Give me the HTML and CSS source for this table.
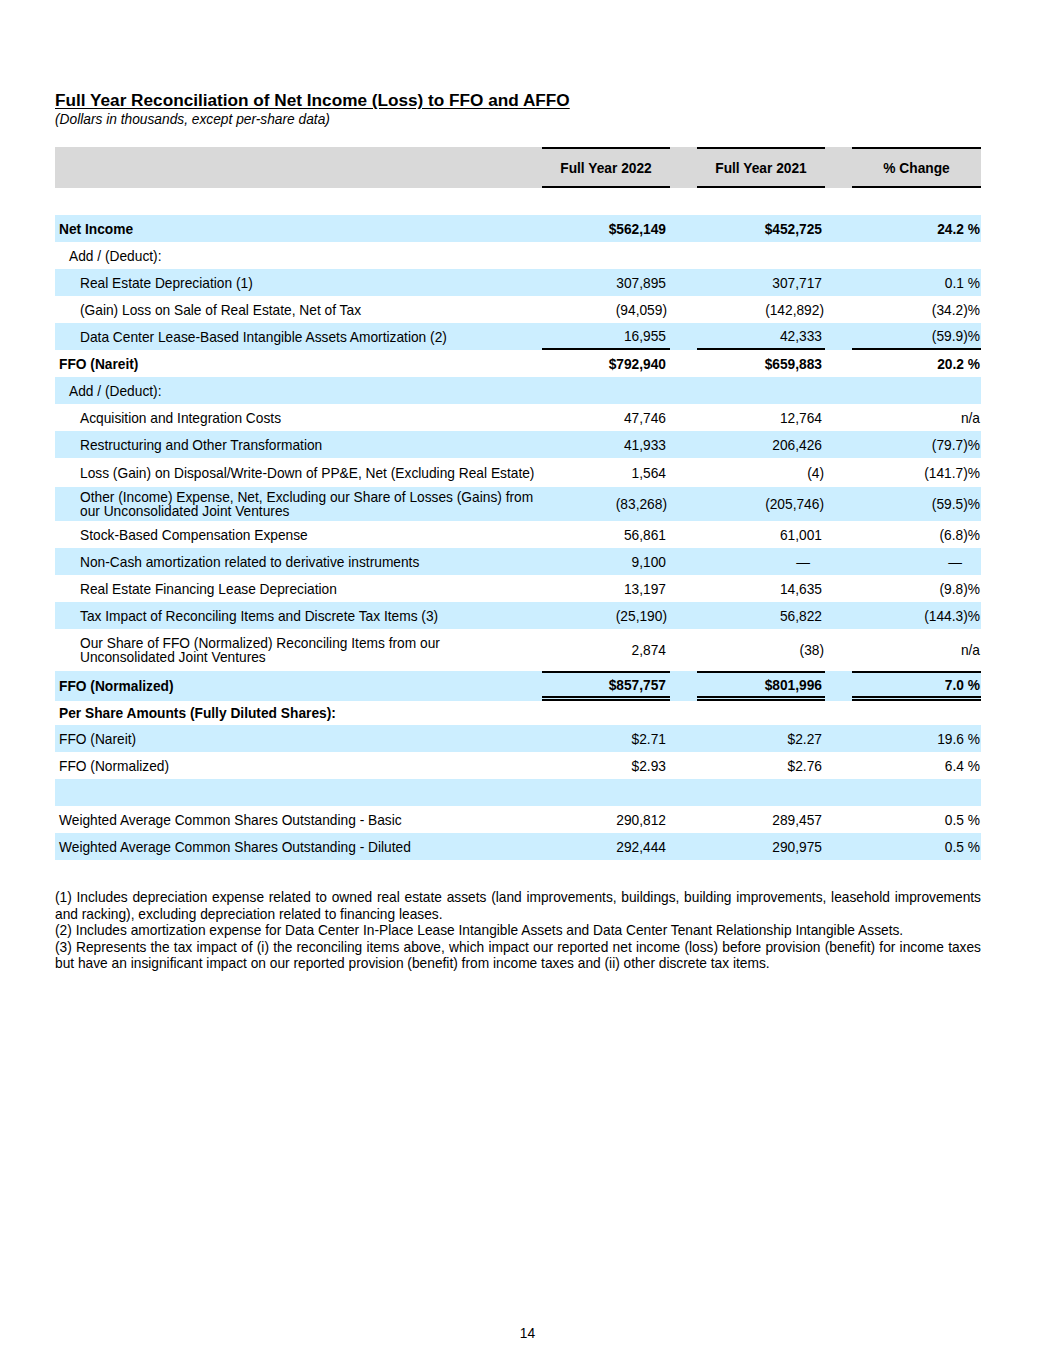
FILE: index.html
```html
<!DOCTYPE html>
<html>
<head>
<meta charset="utf-8">
<link rel="stylesheet" href="styles.css">
</head>
<body>
<div class="page">
  <h1 class="title">Full Year Reconciliation of Net Income (Loss) to FFO and AFFO</h1>
  <p class="subtitle">(Dollars in thousands, except per-share data)</p>

  <table class="recon">
    <colgroup>
      <col class="c-label"><col class="c-num"><col class="c-gap"><col class="c-num"><col class="c-gap"><col class="c-num3">
    </colgroup>
    <thead>
      <tr class="head">
        <th></th><th class="hcol">Full Year 2022</th><th></th><th class="hcol">Full Year 2021</th><th></th><th class="hcol">% Change</th>
      </tr>
    </thead>
    <tbody>
      <tr class="spacer"><td colspan="6"></td></tr>
      <tr class="b bold"><td class="lbl">Net Income</td><td class="n1">$562,149</td><td></td><td class="n2">$452,725</td><td></td><td class="n3">24.2 %</td></tr>
      <tr><td class="lbl i1">Add / (Deduct):</td><td></td><td></td><td></td><td></td><td></td></tr>
      <tr class="b"><td class="lbl i2">Real Estate Depreciation (1)</td><td class="n1">307,895</td><td></td><td class="n2">307,717</td><td></td><td class="n3">0.1 %</td></tr>
      <tr><td class="lbl i2">(Gain) Loss on Sale of Real Estate, Net of Tax</td><td class="n1 p">(94,059)</td><td></td><td class="n2 p">(142,892)</td><td></td><td class="n3">(34.2)%</td></tr>
      <tr class="b under"><td class="lbl i2">Data Center Lease-Based Intangible Assets Amortization (2)</td><td class="n1">16,955</td><td></td><td class="n2">42,333</td><td></td><td class="n3">(59.9)%</td></tr>
      <tr class="bold"><td class="lbl">FFO (Nareit)</td><td class="n1">$792,940</td><td></td><td class="n2">$659,883</td><td></td><td class="n3">20.2 %</td></tr>
      <tr class="b"><td class="lbl i1">Add / (Deduct):</td><td></td><td></td><td></td><td></td><td></td></tr>
      <tr><td class="lbl i2">Acquisition and Integration Costs</td><td class="n1">47,746</td><td></td><td class="n2">12,764</td><td></td><td class="n3">n/a</td></tr>
      <tr class="b"><td class="lbl i2">Restructuring and Other Transformation</td><td class="n1">41,933</td><td></td><td class="n2">206,426</td><td></td><td class="n3">(79.7)%</td></tr>
      <tr class="r29"><td class="lbl i2">Loss (Gain) on Disposal/Write-Down of PP&amp;E, Net (Excluding Real Estate)</td><td class="n1">1,564</td><td></td><td class="n2 p">(4)</td><td></td><td class="n3">(141.7)%</td></tr>
      <tr class="b two"><td class="lbl i2">Other (Income) Expense, Net, Excluding our Share of Losses (Gains) from<br>our Unconsolidated Joint Ventures</td><td class="n1 p">(83,268)</td><td></td><td class="n2 p">(205,746)</td><td></td><td class="n3">(59.5)%</td></tr>
      <tr><td class="lbl i2">Stock-Based Compensation Expense</td><td class="n1">56,861</td><td></td><td class="n2">61,001</td><td></td><td class="n3">(6.8)%</td></tr>
      <tr class="b"><td class="lbl i2">Non-Cash amortization related to derivative instruments</td><td class="n1">9,100</td><td></td><td class="n2 dash">&mdash;</td><td></td><td class="n3 dash3">&mdash;</td></tr>
      <tr><td class="lbl i2">Real Estate Financing Lease Depreciation</td><td class="n1">13,197</td><td></td><td class="n2">14,635</td><td></td><td class="n3">(9.8)%</td></tr>
      <tr class="b"><td class="lbl i2">Tax Impact of Reconciling Items and Discrete Tax Items (3)</td><td class="n1 p">(25,190)</td><td></td><td class="n2">56,822</td><td></td><td class="n3">(144.3)%</td></tr>
      <tr class="two tall"><td class="lbl i2">Our Share of FFO (Normalized) Reconciling Items from our<br>Unconsolidated Joint Ventures</td><td class="n1">2,874</td><td></td><td class="n2 p">(38)</td><td></td><td class="n3">n/a</td></tr>
      <tr class="b bold total"><td class="lbl">FFO (Normalized)</td><td class="n1">$857,757</td><td></td><td class="n2">$801,996</td><td></td><td class="n3">7.0 %</td></tr>
      <tr class="bold short"><td class="lbl">Per Share Amounts (Fully Diluted Shares):</td><td></td><td></td><td></td><td></td><td></td></tr>
      <tr class="b"><td class="lbl">FFO (Nareit)</td><td class="n1">$2.71</td><td></td><td class="n2">$2.27</td><td></td><td class="n3">19.6 %</td></tr>
      <tr><td class="lbl">FFO (Normalized)</td><td class="n1">$2.93</td><td></td><td class="n2">$2.76</td><td></td><td class="n3">6.4 %</td></tr>
      <tr class="b"><td class="lbl"></td><td></td><td></td><td></td><td></td><td></td></tr>
      <tr><td class="lbl">Weighted Average Common Shares Outstanding - Basic</td><td class="n1">290,812</td><td></td><td class="n2">289,457</td><td></td><td class="n3">0.5 %</td></tr>
      <tr class="b"><td class="lbl">Weighted Average Common Shares Outstanding - Diluted</td><td class="n1">292,444</td><td></td><td class="n2">290,975</td><td></td><td class="n3">0.5 %</td></tr>
    </tbody>
  </table>

  <div class="notes">
    <p>(1) Includes depreciation expense related to owned real estate assets (land improvements, buildings, building improvements, leasehold improvements and racking), excluding depreciation related to financing leases.</p>
    <p>(2) Includes amortization expense for Data Center In-Place Lease Intangible Assets and Data Center Tenant Relationship Intangible Assets.</p>
    <p>(3) Represents the tax impact of (i) the reconciling items above, which impact our reported net income (loss) before provision (benefit) for income taxes but have an insignificant impact on our reported provision (benefit) from income taxes and (ii) other discrete tax items.</p>
  </div>

  <div class="pagenum">14</div>
</div>
</body>
</html>
```

FILE: styles.css
```css
* { box-sizing: border-box; }

body {
  margin: 0;
  background: #fff;
  color: #000;
  font-family: "Liberation Sans", Arial, sans-serif;
}

.page {
  width: 1055px;
  min-height: 1365px;
  padding: 90px 0 0 55px;
  display: flex;
  flex-direction: column;
}

.title {
  margin: 0;
  font-size: 17.2px;
  line-height: 20px;
  font-weight: bold;
  text-decoration: underline;
  text-underline-offset: 2px;
}

.subtitle {
  margin: 2px 0 0;
  font-size: 13.75px;
  line-height: 16px;
  font-style: italic;
}

.recon {
  width: 926px;
  margin-top: 19px;
  table-layout: fixed;
  border-collapse: separate;
  border-spacing: 0;
  font-size: 13.75px;
}

.c-label { width: 487px; }
.c-num { width: 128px; }
.c-gap { width: 27px; }
.c-num3 { width: 129px; }

.head th {
  background: #d9d9d9;
  height: 41px;
  padding: 2px 0 0;
  font-weight: bold;
  text-align: center;
}

.head th.hcol {
  border-top: 2px solid #000;
  border-bottom: 2px solid #000;
}

.spacer td { height: 27px; padding: 0; }

.recon td {
  height: 27px;
  padding: 2px 0 0;
  line-height: 14px;
  vertical-align: middle;
  white-space: nowrap;
}

.recon tr.b td { background: #cceeff; }
.recon tr.bold td { font-weight: bold; }

.lbl { padding-left: 4px !important; }
.lbl.i1 { padding-left: 14px !important; }
.lbl.i2 { padding-left: 25px !important; }

.n1, .n2, .n3 { text-align: right; }
.n1 { padding-right: 4px !important; }
.n2 { padding-right: 3px !important; }
.n3 { padding-right: 1px !important; }
.n1.p { padding-right: 3px !important; }
.n2.p { padding-right: 1px !important; }
.n2.dash { padding-right: 15px !important; }
.n3.dash3 { padding-right: 19px !important; }

.recon tr.under td.n1,
.recon tr.under td.n2,
.recon tr.under td.n3 {
  border-bottom: 2px solid #000;
}

.recon tr.r29 td { height: 29px; }
.recon tr.two td { height: 34px; }
.recon tr.two.tall td { height: 42px; }

.recon tr.total td { height: 30px; }
.recon tr.total td.n1,
.recon tr.total td.n2,
.recon tr.total td.n3 {
  border-top: 2px solid #000;
  border-bottom: 5px double #000;
}

.recon tr.short td { height: 24px; }

.notes {
  margin-top: 30px;
  width: 926px;
  font-size: 13.75px;
  line-height: 16.5px;
  text-align: justify;
}

.notes p { margin: 0; }

.pagenum {
  margin-top: auto;
  margin-bottom: 23px;
  margin-left: -55px;
  text-align: center;
  font-size: 13.75px;
  line-height: 16px;
}
```
